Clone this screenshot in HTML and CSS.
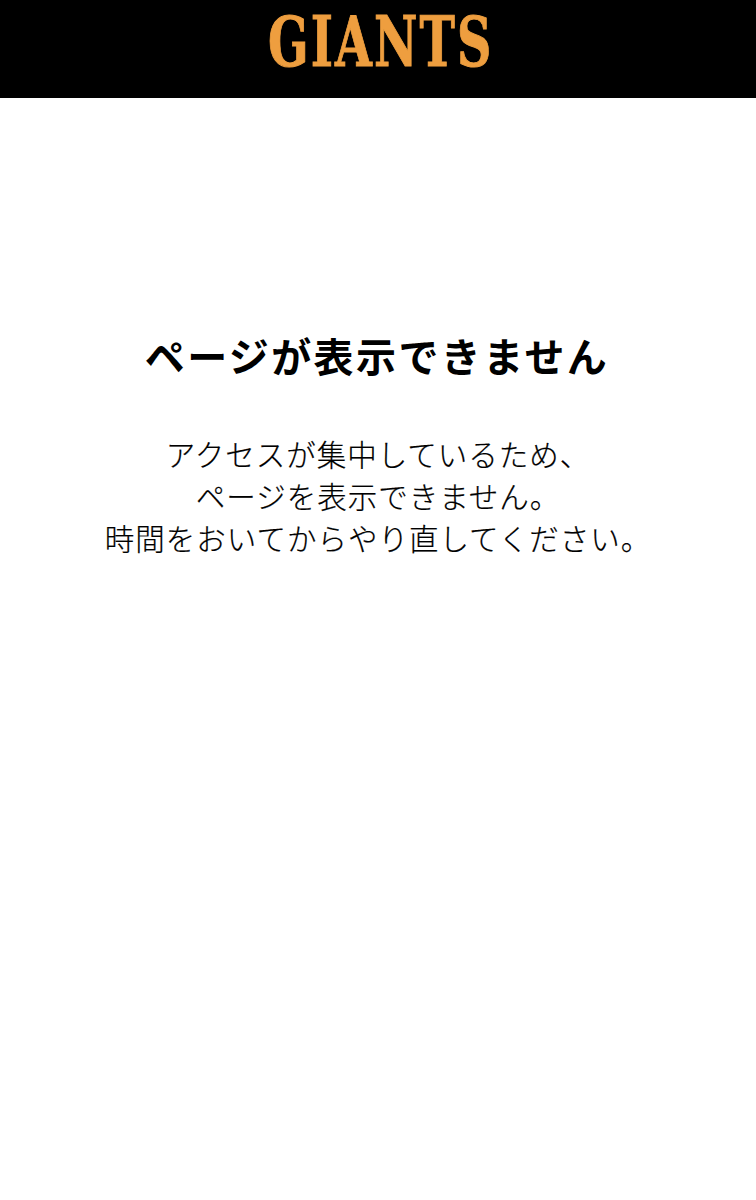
FILE: index.html
```html
<!DOCTYPE html>
<html lang="ja">
<head>
    <meta charset="UTF-8">
    <meta name="viewport" content="width=device-width, initial-scale=1.0">
    <title>ページが表示できません</title>
    <link rel="stylesheet" href="styles.css">
</head>
<body>
    <header class="header">
        <span class="logo">GIANTS</span>
    </header>
    <main class="message">
        <h1 class="title">ページが表示できません</h1>
        <p class="text">アクセスが集中しているため、<br>ページを表示できません。<br>時間をおいてからやり直してください。</p>
    </main>
</body>
</html>
```

FILE: styles.css
```css
body {
    margin: 0;
    background-color: #fff;
    color: #000;
    font-family: "Noto Sans CJK JP", "Noto Sans", sans-serif;
}

.header {
    height: 98px;
    display: flex;
    justify-content: center;
    align-items: center;
    padding-bottom: 15px;
    padding-left: 6px;
    box-sizing: border-box;
    background-color: #000;
}

.logo {
    font-family: "DejaVu Serif", serif;
    font-weight: bold;
    font-size: 70px;
    line-height: 1;
    letter-spacing: 3px;
    color: #ee9e3f;
    -webkit-text-stroke: 1px #ee9e3f;
    transform: scaleX(0.68);
}

.message {
    padding-top: 230px;
    text-align: center;
}

.title {
    margin: 0 0 50px;
    padding-right: 2px;
    font-size: 40px;
    line-height: 54px;
    letter-spacing: 2.4px;
    font-weight: bold;
}

.text {
    margin: 0;
    font-size: 29.5px;
    line-height: 42px;
    letter-spacing: 1px;
    font-weight: 300;
    -webkit-text-stroke: 0.2px #000;
}
```
